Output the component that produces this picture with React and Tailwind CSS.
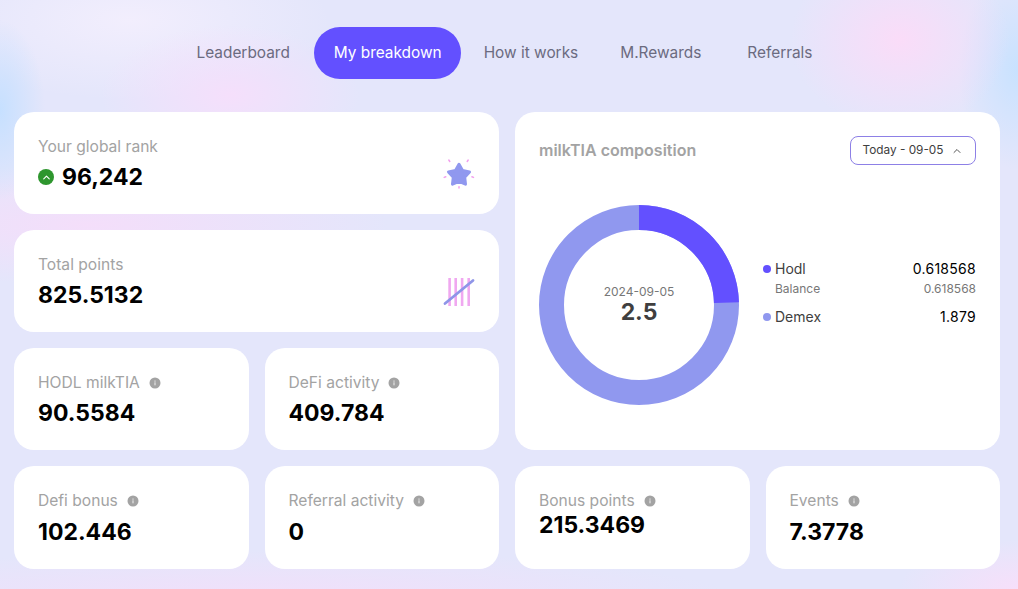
import React from 'react';
import { ChevronUp } from 'lucide-react';

const font = "font-['Inter','Noto_Sans',sans-serif]";

const InfoIcon = () => (
  <svg width="12" height="12" viewBox="0 0 12 12" className="shrink-0">
    <circle cx="6" cy="6" r="5.5" fill="#a3a3a3" />
    <rect x="5.4" y="5.3" width="1.2" height="3" fill="#e5e5e5" />
    <rect x="5.4" y="3.5" width="1.2" height="1.2" fill="#e5e5e5" />
  </svg>
);

const StarIcon = () => (
  <svg width="32" height="32" viewBox="0 0 32 32" className="shrink-0">
    <polygon
      points="16,6.3 19.5,12.5 26.5,13.900 21.700,19.200 22.500,26.200 16,23.300 9.500,26.200 10.300,19.200 5.500,13.900 12.500,12.500"
      fill="#9098ef"
      stroke="#9098ef"
      strokeWidth="3"
      strokeLinejoin="round"
    />
    <g stroke="#f2a0ee" strokeWidth="1.500" strokeLinecap="round">
      <path d="M5.800 2l1 1.500" />
      <path d="M25.200 2l-1 1.500" />
      <path d="M1.200 19.400l1.600-.7" />
      <path d="M30.500 19.400l-1.600-.7" />
      <path d="M16 28.700v1.400" />
    </g>
  </svg>
);

const TallyIcon = () => (
  <svg width="32" height="30" viewBox="0 0 32 30" className="shrink-0">
    <g fill="#f0a8f0">
      <rect x="5.300" y="1" width="2.600" height="28" />
      <rect x="11.400" y="1" width="2.600" height="28" />
      <rect x="17.800" y="1" width="2.600" height="28" />
      <rect x="24.400" y="1" width="2.600" height="28" />
    </g>
    <path d="M2 26.500L30 3.500" stroke="#8f95e8" strokeWidth="2.800" strokeLinecap="round" />
  </svg>
);

const Label = ({ children, info }) => (
  <div className="flex items-center gap-[9px] h-6 text-[15.6px] leading-6 text-[#a3a3a3]">
    <span>{children}</span>
    {info && <InfoIcon />}
  </div>
);

const Value = ({ children, className = '' }) => (
  <div className={`text-[23px] leading-8 font-bold text-black ${className}`}>{children}</div>
);

const StatCard = ({ label, value, valueClass }) => (
  <div className="bg-white rounded-[20px] px-6 pt-[23px]">
    <Label info>{label}</Label>
    <Value className={valueClass}>{value}</Value>
  </div>
);

const NavItem = ({ children, className = '' }) => (
  <button className={`h-[52px] px-[19.5px] pb-[1px] rounded-[26px] text-[15.4px] text-[#6b6b80] ${className}`}>{children}</button>
);

export default function App() {
  return (
    <div
      className={`${font} w-[1018px] h-[589px] overflow-hidden bg-[#e4e6fb] bg-[radial-gradient(ellipse_130px_70px_at_230px_95px,#f5dffb,transparent),radial-gradient(ellipse_45px_90px_at_0px_110px,#c6e0ff,transparent),radial-gradient(ellipse_110px_90px_at_900px_40px,#fadcf8,transparent),radial-gradient(ellipse_60px_100px_at_1018px_70px,#c8e2ff,transparent),radial-gradient(ellipse_300px_60px_at_90px_225px,#f4defa,transparent),radial-gradient(ellipse_480px_50px_at_260px_600px,#f2dffa,transparent),radial-gradient(ellipse_120px_50px_at_1018px_590px,#f7dffa,transparent),radial-gradient(ellipse_200px_80px_at_130px_20px,#f2eefd,transparent)]`}
    >
      <nav className="flex items-start pl-[177px] pt-[27px] h-[112px]">
        <NavItem>Leaderboard</NavItem>
        <NavItem className="ml-[5px] bg-[#6350ff] text-white">My breakdown</NavItem>
        <NavItem className="ml-[3px]">How it works</NavItem>
        <NavItem className="ml-[3px]">M.Rewards</NavItem>
        <NavItem className="ml-[7px]">Referrals</NavItem>
      </nav>

      <div className="ml-[14px] w-[986px] grid grid-cols-4 grid-rows-[102px_102px_102px_103px] gap-4">
        <div className="col-span-2 bg-white rounded-[20px] px-6 pt-[23px] flex items-center justify-between">
          <div className="self-start">
            <Label>Your global rank</Label>
            <div className="flex items-center gap-2 mt-[2px]">
              <span className="w-4 h-4 rounded-full bg-[#2e962e] flex items-center justify-center">
                <ChevronUp size={11} color="#fff" strokeWidth={2.5} />
              </span>
              <Value>96,242</Value>
            </div>
          </div>
          <div className="mt-[-2px]"><StarIcon /></div>
        </div>

        <div className="col-span-2 row-span-3 bg-white rounded-[20px] px-6 pt-6 flex flex-col">
          <div className="flex items-center justify-between">
            <span className="text-base font-semibold text-[#a3a3a3] mt-[-2px]">milkTIA composition</span>
            <button className="w-[126px] h-[29px] border border-[#8d80e6] rounded-lg flex items-center justify-center gap-[8px] text-[11.800px] text-[#404040]">
              Today - 09-05
              <ChevronUp size={12} color="#555" />
            </button>
          </div>
          <div className="flex items-center mt-10">
            <div className="relative w-[200px] h-[200px] shrink-0">
              <svg width="200" height="200" viewBox="0 0 200 200">
                <circle cx="100" cy="100" r="87.500" fill="none" stroke="#9098ef" strokeWidth="25" />
                <path d="M100 12.500A87.500 87.500 0 0 1 187.470 97.700" fill="none" stroke="#6350ff" strokeWidth="25" />
              </svg>
              <div className="absolute inset-0 flex flex-col items-center justify-center">
                <span className="text-xs leading-[14px] text-[#777]">2024-09-05</span>
                <span className="text-[23px] leading-[26px] font-bold text-[#3f3f3f]">2.5</span>
              </div>
            </div>
            <div className="ml-6 flex-1 text-sm text-[#404040] pb-6">
              <div className="flex items-center justify-between h-5">
                <span className="flex items-center gap-1"><i className="w-2 h-2 rounded-full bg-[#6350ff]" />Hodl</span>
                <span className="text-black tracking-[0.02em]">0.618568</span>
              </div>
              <div className="flex items-center justify-between h-5 pl-3 text-xs text-[#777]">
                <span>Balance</span>
                <span>0.618568</span>
              </div>
              <div className="flex items-center justify-between h-5 mt-2">
                <span className="flex items-center gap-1"><i className="w-2 h-2 rounded-full bg-[#9098ef]" />Demex</span>
                <span className="text-black tracking-[0.02em]">1.879</span>
              </div>
            </div>
          </div>
        </div>

        <div className="col-span-2 bg-white rounded-[20px] px-6 pt-[23px] flex items-center justify-between">
          <div className="self-start">
            <Label>Total points</Label>
            <Value className="mt-[2px]">825.5132</Value>
          </div>
          <div className="mt-[-2px]"><TallyIcon /></div>
        </div>

        <StatCard label="HODL milkTIA" value="90.5584" valueClass="mt-[2px]" />
        <StatCard label="DeFi activity" value="409.784" valueClass="mt-[2px]" />
        <StatCard label="Defi bonus" value="102.446" valueClass="mt-[3px]" />
        <StatCard label="Referral activity" value="0" valueClass="mt-[3px]" />
        <StatCard label="Bonus points" value="215.3469" valueClass="mt-[-4px]" />
        <StatCard label="Events" value="7.3778" valueClass="mt-[3px]" />
      </div>
    </div>
  );
}
